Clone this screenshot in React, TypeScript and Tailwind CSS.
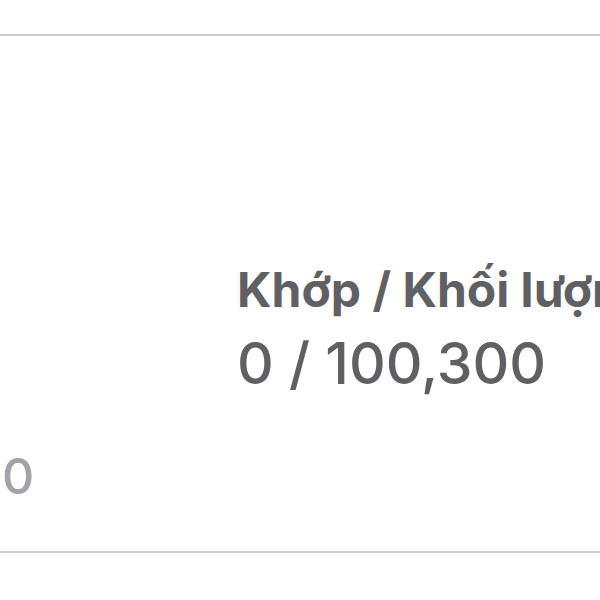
const App = () => {
  return (
    <div
      className="w-[600px] h-[600px] bg-white overflow-hidden"
      style={{ fontFamily: 'Inter, "Noto Sans", sans-serif' }}
    >
      <div className="h-[34px]"></div>
      <div className="border-t-2 border-[#c9c9cc] h-[517px] flex">
        {/* left column, cut off at the edge */}
        <div className="w-[237px] shrink-0 flex flex-col">
          <div className="mt-[410px] ml-[2px] text-[50px] leading-[60px] text-[#a3a3a7] font-medium">
            0
          </div>
        </div>

        {/* right column */}
        <div className="flex-1 min-w-0 flex flex-col">
          <div className="mt-[225px] text-[48px] leading-[58px] font-bold text-[#5f5f64] whitespace-nowrap">
            Khớp / Khối lượng
          </div>
          <div className="mt-[10px] text-[57px] leading-[69px] font-medium text-[#5f5f64] whitespace-nowrap">
            0 / 100,300
          </div>
        </div>
      </div>
      <div className="border-t-2 border-[#cfcfd2]"></div>
    </div>
  );
};

export default App;
